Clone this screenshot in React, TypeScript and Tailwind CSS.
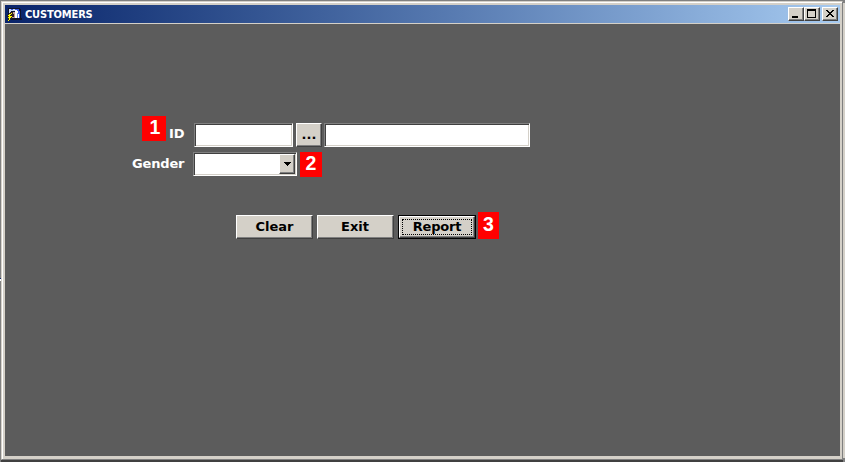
import type { ReactNode } from "react";

function Badge({ children, className }: { children: ReactNode; className: string }) {
  return (
    <span
      className={`flex shrink-0 items-center justify-center bg-[#ff0000] pb-[2px] font-['Liberation_Sans',sans-serif] text-[19.5px] leading-none font-bold text-white ${className}`}
    >
      {children}
    </span>
  );
}

function CaptionButton({ children, className = "" }: { children: ReactNode; className?: string }) {
  return (
    <button
      className={`h-[14px] w-4 shrink-0 border border-t-white border-r-[#404040] border-b-[#404040] border-l-white bg-[#d4d0c8] shadow-[inset_-1px_-1px_0_#808080] ${className}`}
    >
      <svg width="14" height="12" viewBox="0 0 14 12" shapeRendering="crispEdges" className="block">
        {children}
      </svg>
    </button>
  );
}

const raised =
  "shrink-0 border border-t-white border-l-white border-r-[#404040] border-b-[#404040] bg-[#d4d0c8] shadow-[inset_-1px_-1px_0_#808080]";
const sunken =
  "shrink-0 border border-t-[#808080] border-l-[#808080] border-r-white border-b-white bg-white shadow-[inset_1px_1px_0_#404040,inset_-1px_-1px_0_#d4d0c8]";

export default function App() {
  return (
    <div className="flex h-[462px] w-[845px] overflow-hidden bg-[#808080] font-['DejaVu_Sans',sans-serif]">
      <div className="flex w-px shrink-0 flex-col bg-[#808080] pt-[278px]">
        <span className="h-px bg-[#0a246a]" />
        <span className="h-[2px] bg-white" />
      </div>
      <div className="flex w-[842px] shrink-0 flex-col pt-px">
        <div className="flex h-[459px] flex-col border border-t-[#d4d0c8] border-r-[#808080] border-b-[#808080] border-l-[#d4d0c8] bg-[#d4d0c8]">
          <div className="flex h-[457px] flex-col border-t border-l border-white pt-[2px] pr-[2px] pb-[3px] pl-[2px]">
            <header className="flex h-[18px] shrink-0 items-center bg-linear-to-r from-[#0a246a] to-[#a6caf0] pr-[2px] pl-[2px]">
              <svg width="16" height="16" viewBox="0 0 16 16" shapeRendering="crispEdges" className="shrink-0">
                <path fill="#10142c" d="M1 2h12v1h1v9h1v2H4v-1H1z" />
                <path fill="#c8d8f4" d="M2 3h6v2H2zM2 5h2v3H2z" />
                <path fill="#3858e0" d="M4 3h2v1H4zM8 3h4v2H8zM11 5h2v7h-2z" />
                <path fill="#fff" d="M8 4h2v8H8zM10 5h1v2h-1zM11 8h1v4h-1z" />
                <path fill="#6f94f0" d="M10 7h1v5h-1z" />
                <path fill="#c09a94" d="M5 6h3v6H5z" />
                <path fill="#302020" d="M3 6h3v2h1v3H5v2H3v2H1v-4H0V9h2z" />
                <path fill="#ffff00" d="M4 7h1v1H4v1H3v1h2v1H4v1H3v2H2v1H1v-1h1v-2H1v-1h1v-1H1V9h1V8h2z" />
              </svg>
              <h1 className="mt-px ml-[2px] font-['DejaVu_Sans_Condensed','DejaVu_Sans',sans-serif] text-[11px] leading-[17px] font-bold tracking-[-0.15px] whitespace-nowrap text-white [font-stretch:condensed]">
                CUSTOMERS
              </h1>
              <div className="ml-auto flex">
                <CaptionButton>
                  <path d="M3 8h6v2H3z" />
                </CaptionButton>
                <CaptionButton>
                  <path fillRule="evenodd" d="M2 1h9v9H2zM3 3v6h7V3z" />
                </CaptionButton>
                <CaptionButton className="ml-[2px]">
                  <path d="M3 2h2v1h1v1h2V3h1V2h2v1h-1v1H9v1H8v1h1v1h1v1h1v1H9V8H8V7H6v1H5v1H3V8h1V7h1V6h1V5H5V4H4V3H3z" />
                </CaptionButton>
              </div>
            </header>
            <main className="mt-px flex h-[432px] shrink-0 flex-col bg-[#5c5c5c] pt-[92px] text-[13px] font-bold text-white">
              <div className="flex h-[31px] items-start pl-[137px]">
                <Badge className="h-[25px] w-6 pl-[2px]">1</Badge>
                <label className="mt-[10px] ml-[3px] w-[25px] leading-4">ID</label>
                <div className={`mt-[7px] h-6 w-[99px] ${sunken}`} />
                <button className={`mt-[7px] ml-[3px] h-6 w-[26px] text-black ${raised}`}>...</button>
                <div className={`mt-[7px] ml-[2px] h-6 w-[206px] ${sunken}`} />
              </div>
              <div className="mt-[5px] flex h-[25px] items-start pl-[127px]">
                <label className="mt-1 w-[61px] leading-4 tracking-[-0.15px]">Gender</label>
                <div className={`flex h-6 w-[104px] justify-end p-px ${sunken}`}>
                  <button className={`flex h-5 w-4 items-center justify-center ${raised}`}>
                    <svg width="7" height="4" shapeRendering="crispEdges">
                      <path d="M0 0h7v1H6v1H5v1H4v1H3V3H2V2H1V1H0z" />
                    </svg>
                  </button>
                </div>
                <Badge className="ml-[3px] h-[25px] w-[22px]">2</Badge>
              </div>
              <div className="mt-[35px] flex h-[27px] items-start pl-[231px] text-black">
                <button className={`mt-[3px] h-6 w-[77px] ${raised}`}>Clear</button>
                <button className={`mt-[3px] ml-1 h-6 w-[77px] pr-px ${raised}`}>Exit</button>
                <button className="mt-[3px] ml-1 h-6 w-[78px] shrink-0 border border-black">
                  <span className={`flex h-[22px] w-[76px] p-[2px] ${raised}`}>
                    <span className="flex h-4 w-[70px] items-center justify-center border border-dotted border-black pb-[2px] leading-none tracking-[-0.2px]">
                      Report
                    </span>
                  </span>
                </button>
                <Badge className="ml-[2px] h-[27px] w-[21px]">3</Badge>
              </div>
            </main>
          </div>
        </div>
        <div className="h-[2px] bg-[#404040]" />
      </div>
      <div className="mt-[3px] h-[455px] w-[2px] bg-[#d4d0c8]" />
    </div>
  );
}
